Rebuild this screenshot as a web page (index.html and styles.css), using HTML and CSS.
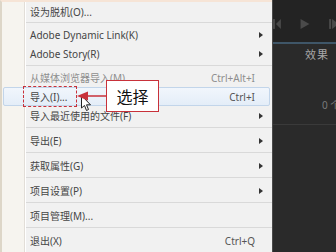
FILE: index.html
```html
<!DOCTYPE html>
<html lang="zh">
<head>
  <meta charset="UTF-8" />
  <title>文件菜单</title>
  <link rel="stylesheet" href="styles.css">
</head>
<body>
  <div class="menu">
    <div class="item"><span class="label">设为脱机(O)...</span></div>
    <div class="sep first"></div>
    <div class="item"><span class="label">Adobe Dynamic Link(K)</span><span class="arrow"></span></div>
    <div class="item"><span class="label">Adobe Story(R)</span><span class="arrow"></span></div>
    <div class="sep"></div>
    <div class="item disabled"><span class="label">从媒体浏览器导入(M)</span><span class="key">Ctrl+Alt+I</span></div>
    <div class="item hover"><span class="label marked">导入(I)...</span><span class="key">Ctrl+I</span></div>
    <div class="item"><span class="label">导入最近使用的文件(F)</span><span class="arrow"></span></div>
    <div class="sep wide"></div>
    <div class="item"><span class="label">导出(E)</span><span class="arrow"></span></div>
    <div class="sep wide"></div>
    <div class="item"><span class="label">获取属性(G)</span><span class="arrow"></span></div>
    <div class="sep wide"></div>
    <div class="item"><span class="label">项目设置(P)</span><span class="arrow"></span></div>
    <div class="sep wide"></div>
    <div class="item"><span class="label">项目管理(M)...</span></div>
    <div class="sep wide"></div>
    <div class="item"><span class="label">退出(X)</span><span class="key">Ctrl+Q</span></div>

    <!-- 标注 -->
    <svg class="cursor" width="11" height="17" viewBox="0 0 11 17">
      <path d="M0.5 0.5 L0.5 13 L3.5 10.5 L5.5 15.5 L7.5 14.5 L5.5 9.8 L9.5 9.8 Z" fill="#fff" stroke="#222" stroke-width="1"/>
    </svg>
    <svg class="pointer" width="29" height="12" viewBox="0 0 29 12">
      <line x1="8" y1="6" x2="29" y2="6" stroke="#c8313a" stroke-width="1.5"/>
      <polygon points="0,6 11,1.5 11,10.5" fill="#c8313a"/>
    </svg>
    <div class="callout">选择</div>
  </div>

  <div class="panel">
    <div class="transport">
      <svg width="64" height="12" viewBox="0 0 64 12">
        <rect x="0" y="1" width="2" height="10" fill="#4a4a4a"/>
        <polygon points="3,6 8,1 8,11" fill="#4a4a4a"/>
        <polygon points="28,1 37,6 28,11" fill="#4a4a4a"/>
        <rect x="57" y="1" width="2" height="10" fill="#4a4a4a"/>
        <polygon points="60,1 64,4 64,8 60,11" fill="#4a4a4a"/>
      </svg>
    </div>
    <div class="tab">效果</div>
    <div class="count">0 个</div>
    <div class="rule"></div>
  </div>
</body>
</html>
```

FILE: styles.css
```css
body {
  margin: 0;
  width: 336px;
  height: 252px;
  overflow: hidden;
  display: flex;
  font-family: "Noto Sans", "Noto Sans CJK SC", sans-serif;
  font-size: 10px;
  background-color: #2a2a2a;
}
.menu {
  position: relative;
  flex: none;
  width: 272px;
  box-sizing: border-box;
  border-left: 2px solid #ddd6c8;
  border-top: 2px solid #f6e4d6;
  background: linear-gradient(to right, #f6f4ef 0, #f6f4ef 22px, #e2ded8 22px, #e2ded8 23px, #fff 23px, #fff 24px, #f1f1f1 24px);
}
.item {
  height: 19px;
  display: flex;
  align-items: center;
  padding: 0 9px 0 28px;
  color: #454545;
}
.item .label {
  flex: 1;
  white-space: nowrap;
}
.item.disabled {
  color: #8e8e8e;
}
.item.hover {
  margin: 0 2px 0 1px;
  padding: 0 6px 0 26px;
  border: 1px solid #c2d5ea;
  border-radius: 2px;
  height: 17px;
  background: linear-gradient(#f1f6fc, #e4edf8);
}
.key {
  color: #555;
  margin-right: 8px;
}
.item.disabled .key {
  color: #8e8e8e;
}
.arrow {
  width: 0;
  height: 0;
  border-top: 3px solid transparent;
  border-bottom: 3px solid transparent;
  border-left: 4px solid #333;
}
.marked {
  flex: none !important;
  margin-left: -7px;
  margin-right: auto;
  padding: 2px 9px 2px 6px;
  border: 1.5px dashed #c8313a;
}
.sep {
  margin: 2px 0 2px 24px;
  height: 1px;
  background-color: #d9d9d9;
}
.sep.first {
  margin-top: 1px;
}
.sep.wide {
  margin-bottom: 3px;
}
.callout {
  position: absolute;
  left: 104px;
  top: 78px;
  width: 51px;
  height: 30px;
  border: 1.5px solid #c8313a;
  background-color: #fff;
  color: #111;
  font-size: 16px;
  display: flex;
  align-items: center;
  justify-content: center;
}
.pointer {
  position: absolute;
  left: 75px;
  top: 88px;
}
.cursor {
  position: absolute;
  left: 79px;
  top: 93px;
}
.panel {
  flex: 1;
  position: relative;
  border-left: 1px solid #4a4a4a;
  background-color: #2a2a2a;
  overflow: hidden;
}
.transport {
  height: 44px;
  background-color: #232323;
  border-bottom: 2px solid #3f5668;
  display: flex;
  align-items: center;
  box-sizing: border-box;
  overflow: hidden;
}
.transport svg {
  margin-top: 6px;
}
.tab {
  color: #a8a8a8;
  font-size: 11px;
  letter-spacing: 1px;
  padding: 2px 0 0 32px;
}
.count {
  color: #7a7a7a;
  font-size: 10px;
  padding: 35px 0 0 49px;
  white-space: nowrap;
}
.rule {
  margin-top: 12px;
  height: 1px;
  background-color: #3a3a3a;
}
```
